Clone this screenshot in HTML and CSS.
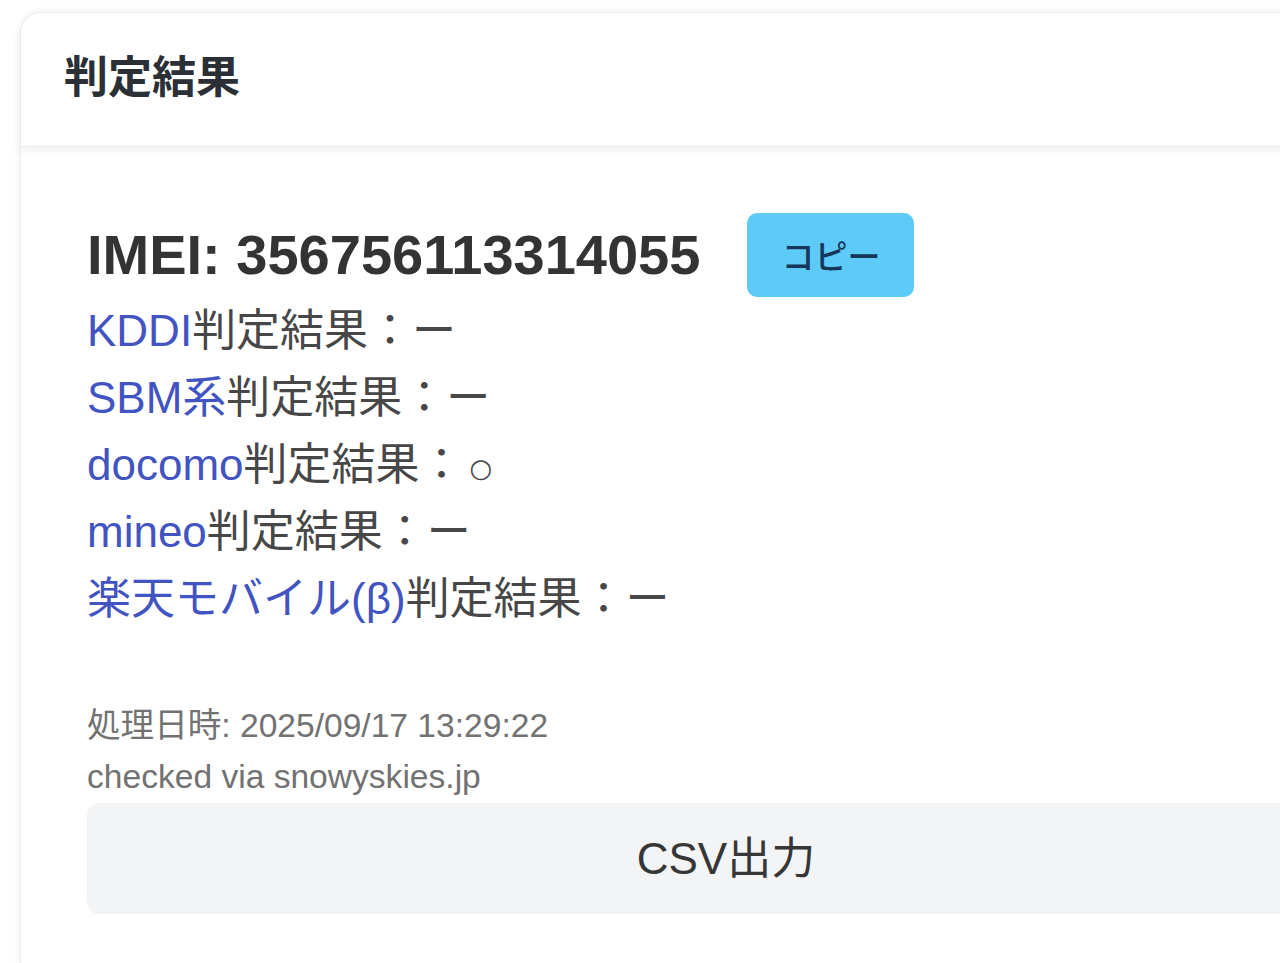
FILE: index.html
```html
<!DOCTYPE html>
<html lang="ja">
<head>
<meta charset="utf-8">
<title>判定結果</title>
<link rel="stylesheet" href="styles.css">
</head>
<body>
<div class="page">
  <div class="card">
    <div class="card-header">
      <h2 class="card-title">判定結果</h2>
    </div>
    <div class="card-body">
      <div class="imei-row">
        <h3 class="imei">IMEI: 356756113314055</h3>
        <button class="copy-btn">コピー</button>
      </div>
      <ul class="results">
        <li><span class="carrier">KDDI</span>判定結果：ー</li>
        <li><span class="carrier">SBM系</span>判定結果：ー</li>
        <li><span class="carrier">docomo</span>判定結果：<span class="ok">○</span></li>
        <li><span class="carrier">mineo</span>判定結果：ー</li>
        <li><span class="carrier">楽天モバイル(β)</span>判定結果：ー</li>
      </ul>
      <div class="meta">
        <p>処理日時: 2025/09/17 13:29:22</p>
        <p>checked via snowyskies.jp</p>
      </div>
      <button class="csv-btn">CSV出力</button>
    </div>
  </div>
</div>
</body>
</html>
```
FILE: styles.css
```css
html, body {
  margin: 0;
  padding: 0;
  background: #ffffff;
  overflow: hidden;
}

body {
  font-family: "Liberation Sans", "Noto Sans CJK JP", sans-serif;
  color: #444;
}

.page {
  padding: 12px 0 0 20px;
  width: 1500px;
}

.card {
  width: 1410px;
  border: 1px solid #ececec;
  border-radius: 20px;
  box-shadow: 0 0 10px rgba(0, 0, 0, 0.06);
  background: #fff;
}

.card-header {
  height: 134px;
  box-sizing: border-box;
  display: flex;
  align-items: center;
  padding: 0 43px 12px;
  border-bottom: 1px solid #ebebeb;
  box-shadow: 0 5px 10px rgba(0, 0, 0, 0.05);
  border-radius: 20px 20px 0 0;
}

.card-title {
  margin: 0;
  font-size: 44px;
  font-weight: bold;
  color: #2b2f36;
  font-family: "Noto Sans CJK JP", sans-serif;
  line-height: 1;
}

.card-body {
  padding: 66px 66px 66px;
}

.imei-row {
  display: flex;
  align-items: center;
  height: 84px;
}

.imei {
  margin: 0;
  font-size: 56px;
  font-weight: bold;
  color: #333;
  line-height: 1;
}

.copy-btn {
  margin-left: 47px;
  width: 167px;
  height: 84px;
  border: none;
  border-radius: 10px;
  background: #5ecaf8;
  color: #15375a;
  font-family: "Noto Sans CJK JP", sans-serif;
  font-size: 33px;
  font-weight: 500;
  padding: 0;
}

.results {
  list-style: none;
  margin: 0;
  padding: 0;
  font-size: 44px;
  line-height: 67px;
  color: #474747;
}

.results li {
  height: 67px;
}

.carrier {
  color: #4253c2;
}

.ok {
  font-family: "DejaVu Sans", sans-serif;
  font-size: 26px;
  line-height: 0;
  margin-left: 6px;
  position: relative;
  top: -3px;
  color: #444;
}

.meta {
  margin-top: 68px;
  font-size: 33.6px;
  line-height: 51px;
  color: #727272;
}

.meta p {
  margin: 0;
}

.csv-btn {
  display: block;
  width: 100%;
  height: 111px;
  margin-top: 1px;
  border: none;
  border-radius: 12px;
  background: #f3f4f6;
  color: #363636;
  font-family: "Liberation Sans", "Noto Sans CJK JP", sans-serif;
  font-size: 44px;
  padding: 0 0 8px;
}
```
